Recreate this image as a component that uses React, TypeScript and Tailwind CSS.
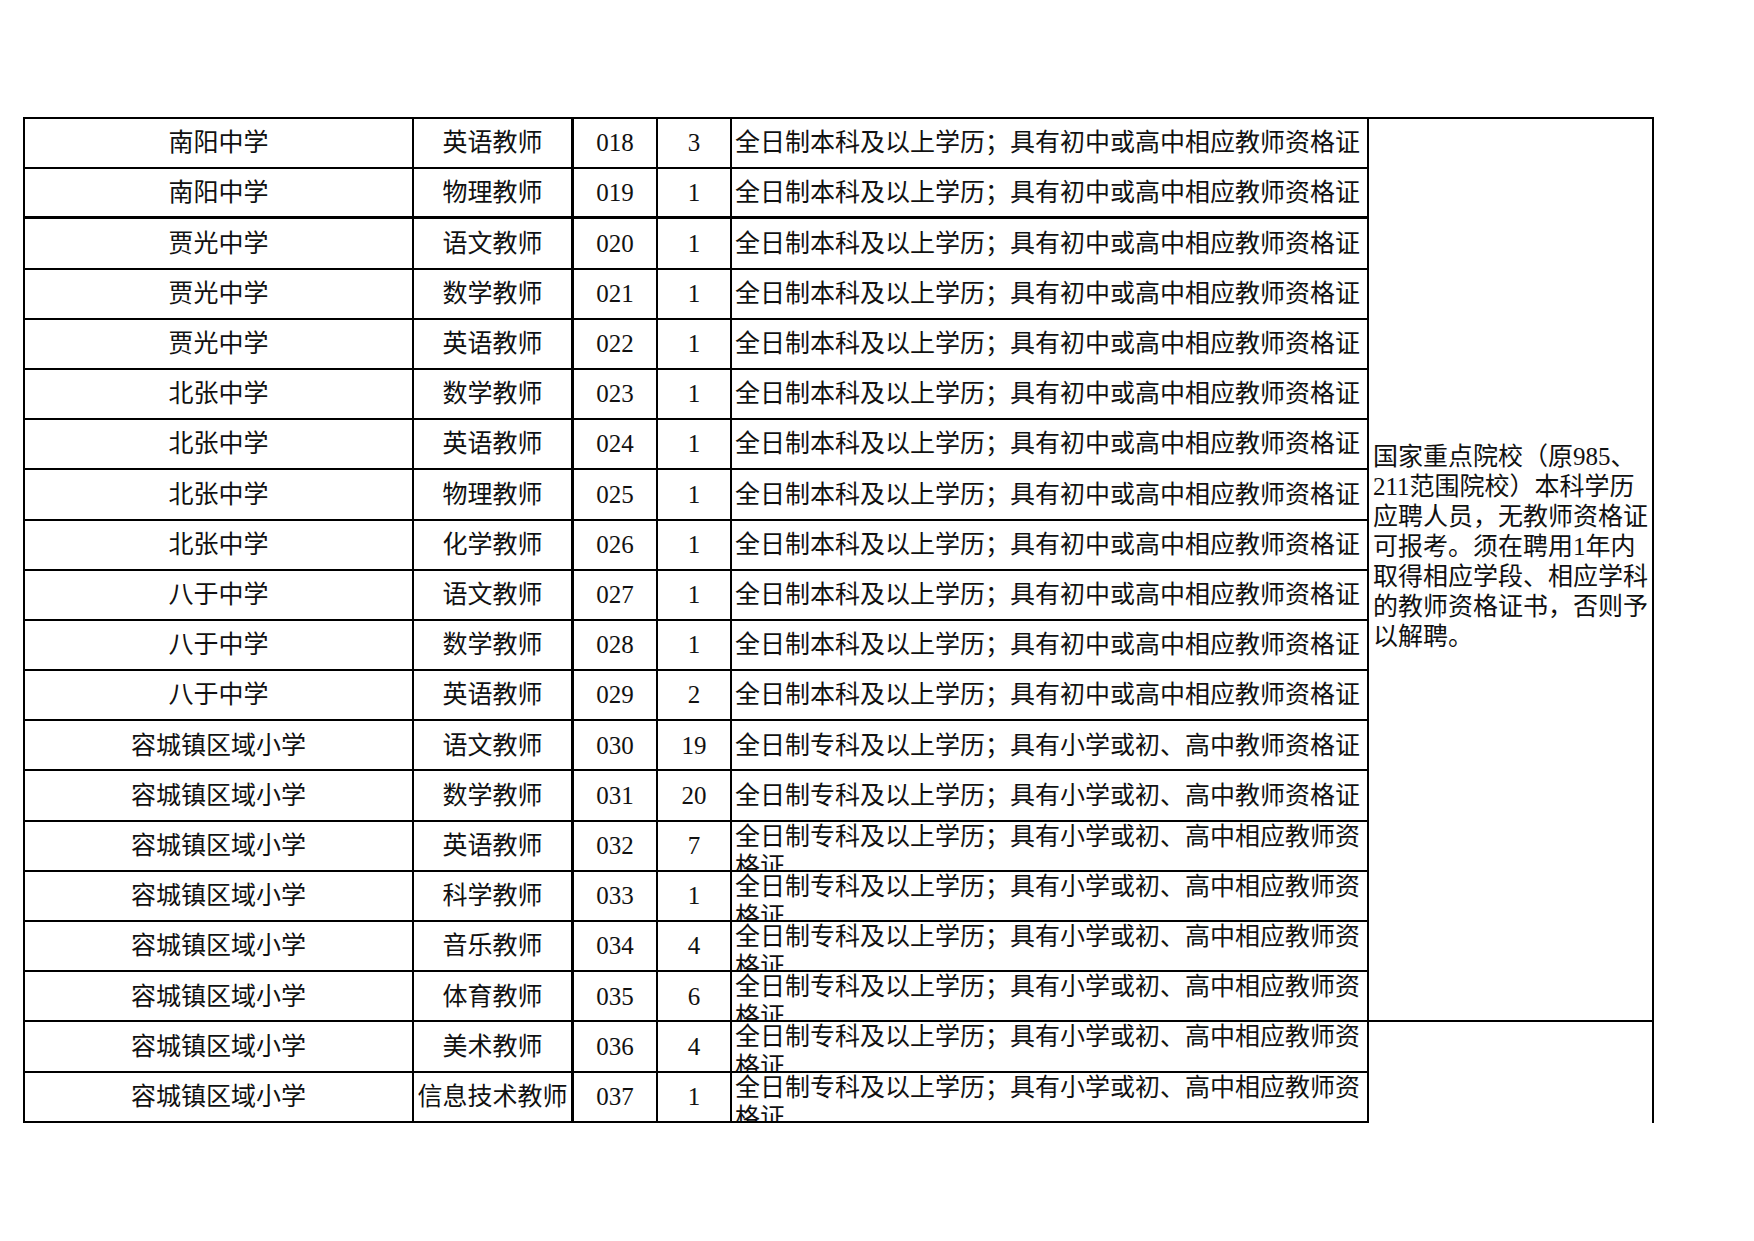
type Row = { school: string; post: string; code: string; count: string; req: string };

const MIDDLE = '全日制本科及以上学历；具有初中或高中相应教师资格证';
const PRIMARY = '全日制专科及以上学历；具有小学或初、高中教师资格证';
const PRIMARY_LONG = '全日制专科及以上学历；具有小学或初、高中相应教师资格证';

const rows: Row[] = [
  { school: '南阳中学', post: '英语教师', code: '018', count: '3', req: MIDDLE },
  { school: '南阳中学', post: '物理教师', code: '019', count: '1', req: MIDDLE },
  { school: '贾光中学', post: '语文教师', code: '020', count: '1', req: MIDDLE },
  { school: '贾光中学', post: '数学教师', code: '021', count: '1', req: MIDDLE },
  { school: '贾光中学', post: '英语教师', code: '022', count: '1', req: MIDDLE },
  { school: '北张中学', post: '数学教师', code: '023', count: '1', req: MIDDLE },
  { school: '北张中学', post: '英语教师', code: '024', count: '1', req: MIDDLE },
  { school: '北张中学', post: '物理教师', code: '025', count: '1', req: MIDDLE },
  { school: '北张中学', post: '化学教师', code: '026', count: '1', req: MIDDLE },
  { school: '八于中学', post: '语文教师', code: '027', count: '1', req: MIDDLE },
  { school: '八于中学', post: '数学教师', code: '028', count: '1', req: MIDDLE },
  { school: '八于中学', post: '英语教师', code: '029', count: '2', req: MIDDLE },
  { school: '容城镇区域小学', post: '语文教师', code: '030', count: '19', req: PRIMARY },
  { school: '容城镇区域小学', post: '数学教师', code: '031', count: '20', req: PRIMARY },
  { school: '容城镇区域小学', post: '英语教师', code: '032', count: '7', req: PRIMARY_LONG },
  { school: '容城镇区域小学', post: '科学教师', code: '033', count: '1', req: PRIMARY_LONG },
  { school: '容城镇区域小学', post: '音乐教师', code: '034', count: '4', req: PRIMARY_LONG },
  { school: '容城镇区域小学', post: '体育教师', code: '035', count: '6', req: PRIMARY_LONG },
  { school: '容城镇区域小学', post: '美术教师', code: '036', count: '4', req: PRIMARY_LONG },
  { school: '容城镇区域小学', post: '信息技术教师', code: '037', count: '1', req: PRIMARY_LONG },
];

const NOTE = [
  '国家重点院校（原985、',
  '211范围院校）本科学历',
  '应聘人员，无教师资格证',
  '可报考。须在聘用1年内',
  '取得相应学段、相应学科',
  '的教师资格证书，否则予',
  '以解聘。',
];

export default function App() {
  return (
    <div className="w-[1754px] h-[1241px] bg-white pt-[117px] pl-[23px] text-[25px] text-[#111] font-['Liberation_Serif','Noto_Sans_CJK_SC',serif]">
      <div className="grid w-max grid-cols-[389px_160px_84px_74px_637px_285px] grid-rows-[repeat(20,50.2px)] border-l-2 border-t-2 border-black">
        {rows.map((r, i) => {
          // the row under 019 is drawn a little heavier in the sheet
          const bottom = i === 1 ? 'border-b-[3px]' : 'border-b-2';
          const wraps = r.req.length > 25;
          return [
            <div key={`s${i}`} className={`flex items-center justify-center whitespace-nowrap border-r-2 border-black ${bottom}`}>
              {r.school}
            </div>,
            <div key={`p${i}`} className={`flex items-center justify-center whitespace-nowrap border-r-[3px] border-black ${bottom}`}>
              {r.post}
            </div>,
            <div key={`c${i}`} className={`flex items-center justify-center border-r-2 border-black ${bottom}`}>
              {r.code}
            </div>,
            <div key={`n${i}`} className={`flex items-center justify-center border-r-2 border-black ${bottom}`}>
              {r.count}
            </div>,
            <div
              key={`q${i}`}
              className={`overflow-hidden pl-[3px] border-r-2 border-black ${bottom} ${
                wraps ? 'leading-[30px]' : 'flex items-center whitespace-nowrap'
              }`}
            >
              {r.req}
            </div>,
            i === 0 ? (
              <div key="note" className="row-span-18 flex flex-col justify-center pl-[4px] pb-[46px] leading-[30px] border-r-2 border-b-2 border-black">
                {NOTE.map((l) => (
                  <div key={l} className="whitespace-nowrap">{l}</div>
                ))}
              </div>
            ) : i === 18 ? (
              <div key="note2" className="row-span-2 border-r-2 border-black" />
            ) : null,
          ];
        })}
      </div>
    </div>
  );
}
